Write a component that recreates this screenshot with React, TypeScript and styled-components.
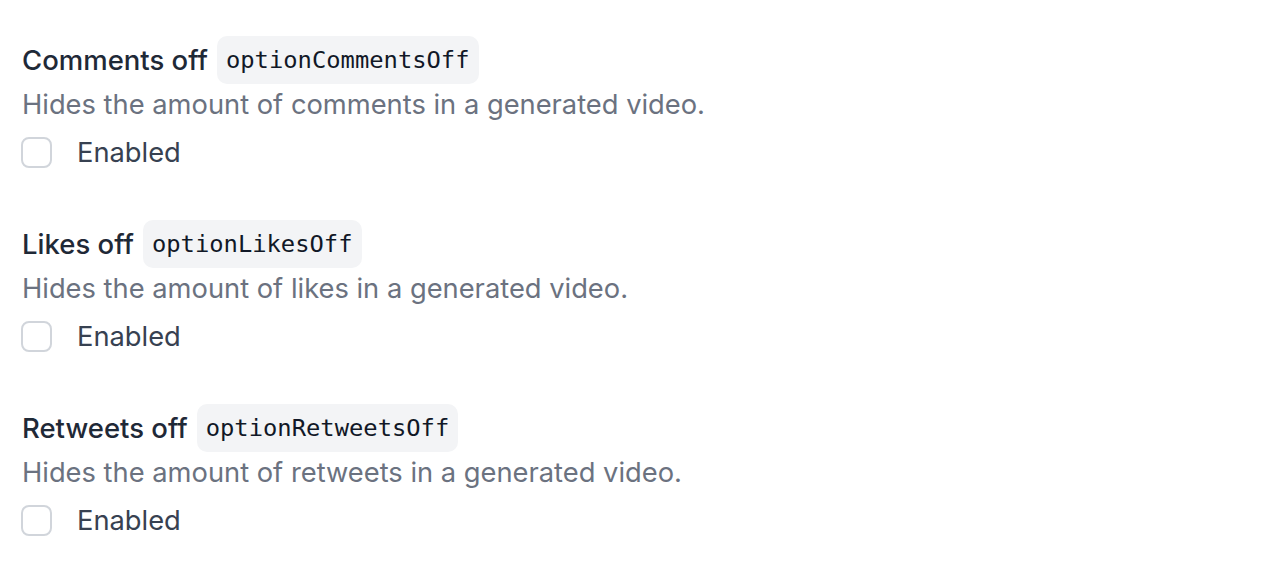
import styled, {createGlobalStyle} from 'styled-components';

const GlobalStyle = createGlobalStyle`
  html, body {
    margin: 0;
    padding: 0;
    background: #ffffff;
  }
  body {
    font-family: Inter, "Noto Sans", sans-serif;
  }
`;

interface Option {
  title: string;
  name: string;
  description: string;
}

const options: Option[] = [
  {
    title: 'Comments off',
    name: 'optionCommentsOff',
    description: 'Hides the amount of comments in a generated video.',
  },
  {
    title: 'Likes off',
    name: 'optionLikesOff',
    description: 'Hides the amount of likes in a generated video.',
  },
  {
    title: 'Retweets off',
    name: 'optionRetweetsOff',
    description: 'Hides the amount of retweets in a generated video.',
  },
];

const App = () => {
  return (
    <>
      <GlobalStyle />
      <Page>
        {options.map((opt) => (
          <Section key={opt.name}>
            <Header>
              <Title>{opt.title}</Title>
              <Code>{opt.name}</Code>
            </Header>
            <Description>{opt.description}</Description>
            <CheckRow>
              <Box type="checkbox" />
              <CheckLabel>Enabled</CheckLabel>
            </CheckRow>
          </Section>
        ))}
      </Page>
    </>
  );
};

const Page = styled.div`
  display: flex;
  flex-direction: column;
  gap: 48px;
  padding: 36px 22px 0 21px;
`;

const Section = styled.div`
  display: flex;
  flex-direction: column;
`;

const Header = styled.div`
  display: flex;
  align-items: center;
  gap: 9px;
  height: 48px;
  padding-left: 1px;
`;

const Title = styled.span`
  font-size: 27.5px;
  font-weight: 500;
  color: #1f2937;
`;

const Code = styled.code`
  display: inline-flex;
  align-items: center;
  height: 48px;
  padding: 0 9px;
  border-radius: 10px;
  background: #f3f4f6;
  color: #111827;
  font-family: "DejaVu Sans Mono", "Liberation Mono", monospace;
  font-size: 23.8px;
`;

const Description = styled.p`
  margin: 1px 0 0 1px;
  font-size: 27.3px;
  line-height: 40px;
  color: #6b7280;
`;

const CheckRow = styled.label`
  display: flex;
  align-items: center;
  gap: 25px;
  height: 40px;
  margin-top: 7px;
`;

const Box = styled.input`
  appearance: none;
  margin: 0;
  width: 31px;
  height: 31px;
  border: 2px solid #d1d5db;
  border-radius: 8px;
  background: #fff;
  box-sizing: border-box;
`;

const CheckLabel = styled.span`
  font-size: 27.3px;
  color: #374151;
`;

export default App;
